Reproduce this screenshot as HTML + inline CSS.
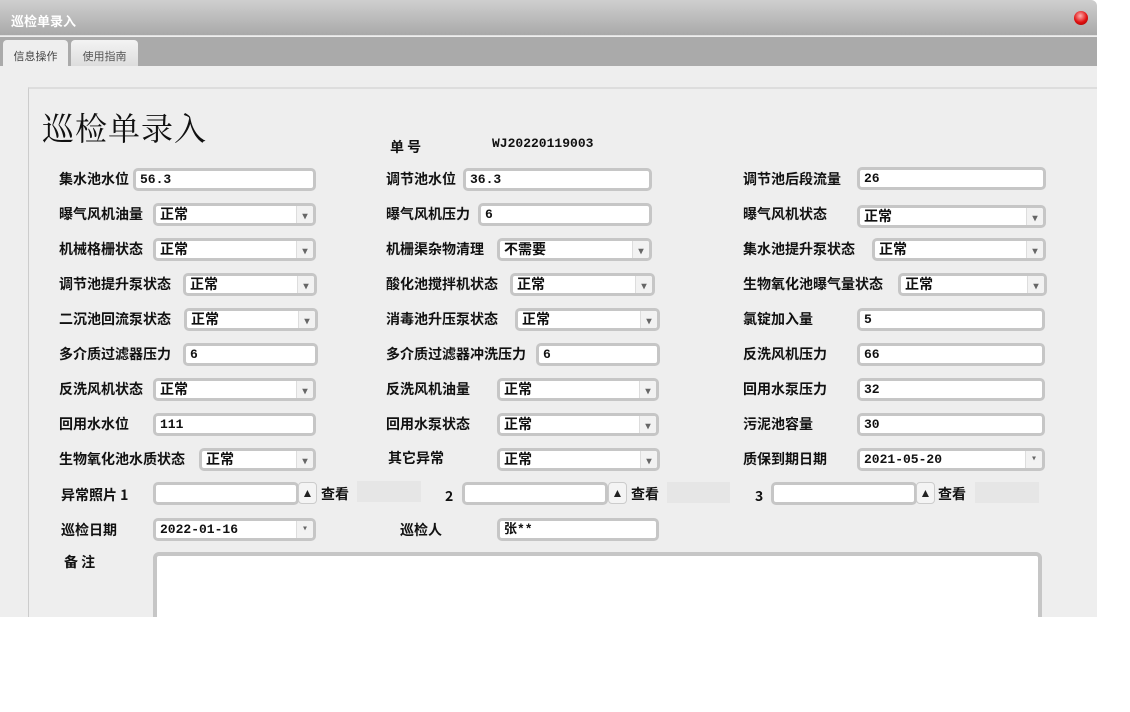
<!DOCTYPE html>
<html><head><meta charset="utf-8"><style>
*{margin:0;padding:0;box-sizing:border-box}
body{width:1130px;height:712px;background:#fff;position:relative;overflow:hidden;font-family:"Liberation Sans","Noto Sans CJK SC",sans-serif}
#win{position:absolute;left:0;top:0;width:1097px;height:617px;background:#eeeeee;border-radius:0 6px 0 0;overflow:hidden}
#title{position:absolute;left:0;top:0;width:1097px;height:36px;background:linear-gradient(#cfcfcf,#a9a9a9);border-bottom:1px solid #e0e0e0}
#title span{position:absolute;left:11px;top:11px;color:#fff;font-size:13px;font-weight:bold}
#close{position:absolute;left:1074px;top:11px;width:14px;height:14px;border-radius:50%;background:radial-gradient(circle at 45% 35%,#ffb0b0,#e01010 55%,#900 100%)}
#tabs{position:absolute;left:0;top:37px;width:1097px;height:29px;background:#aaaaaa}
.tab{position:absolute;top:3px;height:26px;font-size:11px;color:#555;padding:8px 0 0 0;text-align:center;border-radius:4px 4px 0 0}
#panel{position:absolute;left:28px;top:87px;width:1080px;height:600px;border-left:1px solid #ccc;border-top:2px solid #ddd}
.l{position:absolute;font-size:14px;font-weight:bold;color:#111;white-space:nowrap;font-family:"Noto Sans CJK SC",sans-serif;line-height:16px}
.f{position:absolute;height:23px;border:3px solid #c6c6c6;border-radius:5px;background:#fff;font-family:"Liberation Mono","Noto Sans CJK SC",monospace;font-weight:bold;font-size:13px;line-height:17px;padding-left:4px;color:#111;white-space:nowrap;overflow:hidden}
.f.s{font-family:"Noto Sans CJK SC",sans-serif;font-size:14px}
.f.s:after{content:"▾";position:absolute;right:0;top:0;width:16px;height:17px;background:#f2f2f2;border-left:1px solid #ddd;font-size:10px;color:#666;text-align:center;line-height:17px}
.b{position:absolute;width:19px;height:22px;border:1px solid #ccc;border-radius:4px;background:#f4f4f4;font-size:12px;text-align:center;line-height:20px;color:#222}
.g{position:absolute;height:21px;background:#e6e6e6}
</style></head><body>
<div id="win">
<div id="title"><span>巡检单录入</span><div id="close"></div></div>
<div id="tabs">
<div class="tab" style="left:3px;width:65px;background:#eee;color:#444">信息操作</div>
<div class="tab" style="left:71px;width:67px;background:linear-gradient(#f3f3f3,#ddd)">使用指南</div>
</div>
<div id="panel"></div>
</div>
<div class="l" style="left:42px;top:108px;font-size:32px;letter-spacing:1px;line-height:38px;font-weight:normal;font-family:'Noto Serif CJK SC',serif">巡检单录入</div>
<div class="l" style="left:390px;top:139px">单 号</div>
<div class="l" style="left:492px;top:136px;font-family:'Liberation Mono',monospace;font-size:13px">WJ20220119003</div>

<div class="l" style="left:59px;top:171px">集水池水位</div><div class="f" style="left:133px;top:168px;width:183px">56.3</div>
<div class="l" style="left:386px;top:171px">调节池水位</div><div class="f" style="left:463px;top:168px;width:189px">36.3</div>
<div class="l" style="left:743px;top:171px">调节池后段流量</div><div class="f" style="left:857px;top:167px;width:189px">26</div>

<div class="l" style="left:59px;top:206px">曝气风机油量</div><div class="f s" style="left:153px;top:203px;width:163px">正常</div>
<div class="l" style="left:386px;top:206px">曝气风机压力</div><div class="f" style="left:478px;top:203px;width:174px">6</div>
<div class="l" style="left:743px;top:206px">曝气风机状态</div><div class="f s" style="left:857px;top:205px;width:189px">正常</div>

<div class="l" style="left:59px;top:241px">机械格栅状态</div><div class="f s" style="left:153px;top:238px;width:163px">正常</div>
<div class="l" style="left:386px;top:241px">机栅渠杂物清理</div><div class="f s" style="left:497px;top:238px;width:155px">不需要</div>
<div class="l" style="left:743px;top:241px">集水池提升泵状态</div><div class="f s" style="left:872px;top:238px;width:174px">正常</div>

<div class="l" style="left:59px;top:276px">调节池提升泵状态</div><div class="f s" style="left:183px;top:273px;width:134px">正常</div>
<div class="l" style="left:386px;top:276px">酸化池搅拌机状态</div><div class="f s" style="left:510px;top:273px;width:145px">正常</div>
<div class="l" style="left:743px;top:276px">生物氧化池曝气量状态</div><div class="f s" style="left:898px;top:273px;width:149px">正常</div>

<div class="l" style="left:59px;top:311px">二沉池回流泵状态</div><div class="f s" style="left:184px;top:308px;width:134px">正常</div>
<div class="l" style="left:386px;top:311px">消毒池升压泵状态</div><div class="f s" style="left:515px;top:308px;width:145px">正常</div>
<div class="l" style="left:743px;top:311px">氯锭加入量</div><div class="f" style="left:857px;top:308px;width:188px">5</div>

<div class="l" style="left:59px;top:346px">多介质过滤器压力</div><div class="f" style="left:183px;top:343px;width:135px">6</div>
<div class="l" style="left:386px;top:346px">多介质过滤器冲洗压力</div><div class="f" style="left:536px;top:343px;width:124px">6</div>
<div class="l" style="left:743px;top:346px">反洗风机压力</div><div class="f" style="left:857px;top:343px;width:188px">66</div>

<div class="l" style="left:59px;top:381px">反洗风机状态</div><div class="f s" style="left:153px;top:378px;width:163px">正常</div>
<div class="l" style="left:386px;top:381px">反洗风机油量</div><div class="f s" style="left:497px;top:378px;width:162px">正常</div>
<div class="l" style="left:743px;top:381px">回用水泵压力</div><div class="f" style="left:857px;top:378px;width:188px">32</div>

<div class="l" style="left:59px;top:416px">回用水水位</div><div class="f" style="left:153px;top:413px;width:163px">111</div>
<div class="l" style="left:386px;top:416px">回用水泵状态</div><div class="f s" style="left:497px;top:413px;width:162px">正常</div>
<div class="l" style="left:743px;top:416px">污泥池容量</div><div class="f" style="left:857px;top:413px;width:188px">30</div>

<div class="l" style="left:59px;top:451px">生物氧化池水质状态</div><div class="f s" style="left:199px;top:448px;width:117px">正常</div>
<div class="l" style="left:388px;top:450px">其它异常</div><div class="f s" style="left:497px;top:448px;width:163px">正常</div>
<div class="l" style="left:743px;top:451px">质保到期日期</div><div class="f s" style="left:857px;top:448px;width:188px;font-family:'Liberation Mono',monospace;font-size:13px">2021-05-20</div>

<div class="l" style="left:61px;top:487px">异常照片 1</div>
<div class="f" style="left:153px;top:482px;width:146px"></div><div class="b" style="left:298px;top:482px">▲</div><div class="l" style="left:321px;top:486px">查看</div><div class="g" style="left:357px;top:481px;width:64px"></div>
<div class="l" style="left:445px;top:488px">2</div>
<div class="f" style="left:462px;top:482px;width:146px"></div><div class="b" style="left:608px;top:482px">▲</div><div class="l" style="left:631px;top:486px">查看</div><div class="g" style="left:667px;top:482px;width:63px"></div>
<div class="l" style="left:755px;top:488px">3</div>
<div class="f" style="left:771px;top:482px;width:146px"></div><div class="b" style="left:916px;top:482px">▲</div><div class="l" style="left:938px;top:486px">查看</div><div class="g" style="left:975px;top:482px;width:64px"></div>

<div class="l" style="left:61px;top:522px">巡检日期</div><div class="f s" style="left:153px;top:518px;width:163px;font-family:'Liberation Mono',monospace;font-size:13px">2022-01-16</div>
<div class="l" style="left:400px;top:522px">巡检人</div><div class="f" style="left:497px;top:518px;width:162px">张**</div>

<div class="l" style="left:64px;top:554px">备 注</div>
<div class="f" style="left:153px;top:552px;width:889px;height:80px;border-width:4px;border-radius:6px"></div>
<div style="position:absolute;left:0;top:617px;width:1130px;height:95px;background:#fff"></div>
</body></html>
